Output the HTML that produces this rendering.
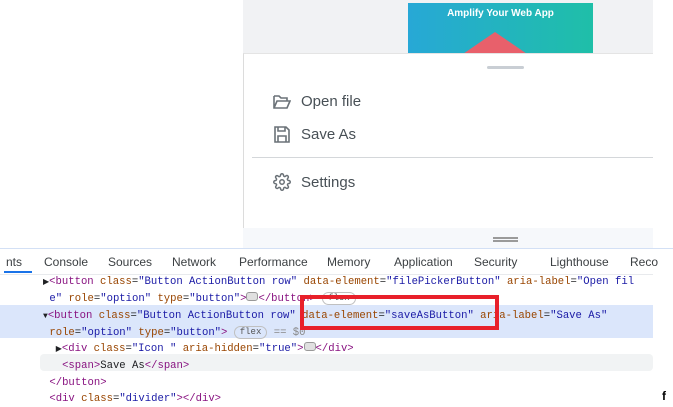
<!DOCTYPE html>
<html><head><style>
*{margin:0;padding:0;box-sizing:border-box}
body{width:673px;height:403px;overflow:hidden;background:#fff;position:relative;font-family:"Liberation Sans",sans-serif}
.abs{position:absolute}
.menu{font-size:15px;color:#485056}
.code{font-family:"Liberation Mono",monospace;font-size:10.6px;white-space:pre;color:#202124;line-height:16.3px}
.t{color:#881280}.a{color:#994500}.v{color:#1a1aa6}
.pill{display:inline-block;border:1px solid #c0c0c0;border-radius:8px;font-size:9px;padding:0 5px;line-height:11px;color:#555;vertical-align:1px}
.dots{display:inline-block;width:12px;height:9px;background:#e0e0e0;border:1px solid #999;border-radius:3px;vertical-align:0}
.tab{position:absolute;top:255px;font-size:12px;color:#3c4043}
</style></head><body>
<div class="abs" style="left:243px;top:0;width:410px;height:56px;background:#f1f2f4"></div>
<div class="abs" style="left:408px;top:3px;width:185px;height:52px;background:linear-gradient(90deg,#27a8d6,#1fbfa8)"></div>
<div class="abs" style="left:408px;top:8px;width:185px;text-align:center;color:#fff;font-size:10px;font-weight:bold">Amplify Your Web App</div>
<div class="abs" style="left:460px;top:32px;width:70px;height:24px;background:#e8606b;clip-path:polygon(50% 0,100% 100%,0 100%)"></div>
<div class="abs" style="left:243px;top:53px;width:410px;height:176px;background:#fff;border-left:1px solid #dcdcdc;border-top:1px solid #e4e4e4"></div>
<div class="abs" style="left:487px;top:66px;width:37px;height:3px;border-radius:2px;background:#c9ced4"></div>
<svg class="abs" style="left:273px;top:94px" width="18" height="16" viewBox="0 0 18 16" fill="none" stroke="#6b7278" stroke-width="1.6"><path d="M1 2h5l2 2h6v3M1 2v12h13l3-7H4L1 14"/></svg>
<div class="abs menu" style="left:301px;top:93px">Open file</div>
<svg class="abs" style="left:274px;top:126px" width="16" height="17" viewBox="0 0 16 17" fill="none" stroke="#6b7278" stroke-width="1.6"><path d="M1 1h11l3 3v12H1z M4 1v4h7V1 M4 16v-6h8v6"/></svg>
<div class="abs menu" style="left:301px;top:126px">Save As</div>
<div class="abs" style="left:252px;top:157px;width:401px;height:1px;background:#d4d7da"></div>
<svg class="abs" style="left:273px;top:173px" width="18" height="18" viewBox="0 0 24 24" fill="none" stroke="#6b7278" stroke-width="2"><circle cx="12" cy="12" r="3"/><path d="M19.4 15a1.7 1.7 0 0 0 .3 1.8l.1.1a2 2 0 1 1-2.8 2.8l-.1-.1a1.7 1.7 0 0 0-1.8-.3 1.7 1.7 0 0 0-1 1.5V21a2 2 0 1 1-4 0v-.1a1.7 1.7 0 0 0-1.1-1.5 1.7 1.7 0 0 0-1.8.3l-.1.1a2 2 0 1 1-2.8-2.8l.1-.1a1.7 1.7 0 0 0 .3-1.8 1.7 1.7 0 0 0-1.5-1H3a2 2 0 1 1 0-4h.1a1.7 1.7 0 0 0 1.5-1.1 1.7 1.7 0 0 0-.3-1.8l-.1-.1a2 2 0 1 1 2.8-2.8l.1.1a1.7 1.7 0 0 0 1.8.3H9a1.7 1.7 0 0 0 1-1.5V3a2 2 0 1 1 4 0v.1a1.7 1.7 0 0 0 1 1.5 1.7 1.7 0 0 0 1.8-.3l.1-.1a2 2 0 1 1 2.8 2.8l-.1.1a1.7 1.7 0 0 0-.3 1.8V9a1.7 1.7 0 0 0 1.5 1H21a2 2 0 1 1 0 4h-.1a1.7 1.7 0 0 0-1.5 1z"/></svg>
<div class="abs menu" style="left:301px;top:174px">Settings</div>
<div class="abs" style="left:243px;top:228px;width:410px;height:20px;background:#f6f8fb"></div>
<div class="abs" style="left:493px;top:237px;width:25px;height:2px;background:#9a9a9a"></div>
<div class="abs" style="left:493px;top:240px;width:25px;height:2px;background:#9a9a9a"></div>
<div class="abs" style="left:0;top:248px;width:673px;height:1px;background:#d3e0f5"></div>
<div class="abs" style="left:0;top:274px;width:653px;height:1px;background:#e8eaed"></div>
<div class="tab" style="left:6px">nts</div>
<div class="abs" style="left:4px;top:271px;width:28px;height:2px;background:#1a73e8"></div>
<div class="tab" style="left:44px">Console</div>
<div class="tab" style="left:108px">Sources</div>
<div class="tab" style="left:172px">Network</div>
<div class="tab" style="left:239px">Performance</div>
<div class="tab" style="left:327px">Memory</div>
<div class="tab" style="left:394px">Application</div>
<div class="tab" style="left:474px">Security</div>
<div class="tab" style="left:550px">Lighthouse</div>
<div class="tab" style="left:630px">Reco</div>
<div class="abs" style="left:0;top:305px;width:653px;height:33px;background:#dbe6fb"></div>
<div class="abs" style="left:40px;top:354px;width:613px;height:17px;background:#f1f3f4;border-radius:4px"></div>
<div class="abs code" style="left:43px;top:274px"><span style="font-size:8px">▶</span><span class="t">&lt;button</span> <span class="a">class</span>=<span class="v">"Button ActionButton row"</span> <span class="a">data-element</span>=<span class="v">"filePickerButton"</span> <span class="a">aria-label</span>=<span class="v">"Open fil</span>
 <span class="v">e"</span> <span class="a">role</span>=<span class="v">"option"</span> <span class="a">type</span>=<span class="v">"button"</span><span class="t">&gt;</span><span class="dots"></span><span class="t">&lt;/button&gt;</span> <span class="pill">flex</span>
<span style="font-size:8px">▼</span><span class="t">&lt;button</span> <span class="a">class</span>=<span class="v">"Button ActionButton row"</span> <span class="a">data-element</span>=<span class="v">"saveAsButton"</span> <span class="a">aria-label</span>=<span class="v">"Save As"</span>
 <span class="a">role</span>=<span class="v">"option"</span> <span class="a">type</span>=<span class="v">"button"</span><span class="t">&gt;</span> <span class="pill">flex</span> <span style="color:#888">== $0</span>
  <span style="font-size:8px">▶</span><span class="t">&lt;div</span> <span class="a">class</span>=<span class="v">"Icon "</span> <span class="a">aria-hidden</span>=<span class="v">"true"</span><span class="t">&gt;</span><span class="dots"></span><span class="t">&lt;/div&gt;</span>
   <span class="t">&lt;span&gt;</span>Save As<span class="t">&lt;/span&gt;</span>
 <span class="t">&lt;/button&gt;</span>
 <span class="t">&lt;div</span> <span class="a">class</span>=<span class="v">"divider"</span><span class="t">&gt;&lt;/div&gt;</span></div>
<div class="abs" style="left:300px;top:295px;width:199px;height:35px;border:4px solid #e8202a"></div>
<div class="abs" style="left:662px;top:389px;font-size:12px;font-weight:bold">f</div>
</body></html>
